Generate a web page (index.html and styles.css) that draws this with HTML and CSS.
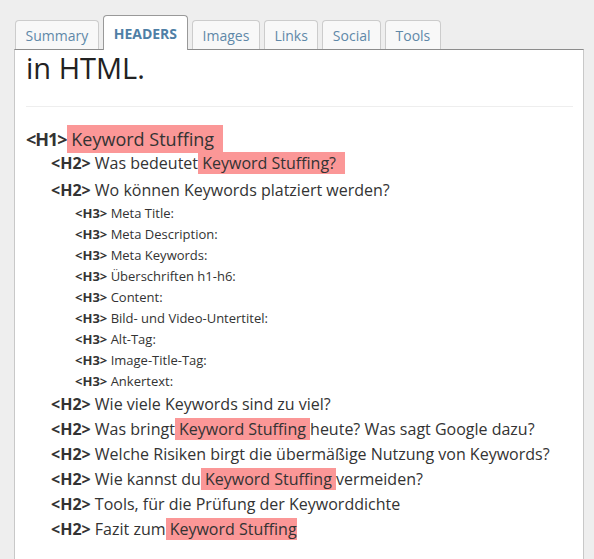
FILE: index.html
```html
<!DOCTYPE html>
<html>
  <head>
    <title>Headers</title>
    <link rel="stylesheet" href="styles.css">
  </head>
  <body>
    <div class="tabs">
      <div class="tab">Summary</div>
      <div class="tab active">HEADERS</div>
      <div class="tab">Images</div>
      <div class="tab">Links</div>
      <div class="tab">Social</div>
      <div class="tab">Tools</div>
    </div>
    <div class="panel">
      <div class="title">in HTML.</div>
      <div class="divider"></div>
      <ul class="outline">
        <li class="h1"><b>&lt;H1&gt;</b><span class="hl end"> Keyword Stuffing</span></li>
        <li class="h2"><b>&lt;H2&gt;</b> Was bedeutet<span class="hl end"> Keyword Stuffing?</span></li>
        <li class="h2 next"><b>&lt;H2&gt;</b> Wo können Keywords platziert werden?</li>
        <li class="h3"><b>&lt;H3&gt;</b> Meta Title:</li>
        <li class="h3"><b>&lt;H3&gt;</b> Meta Description:</li>
        <li class="h3"><b>&lt;H3&gt;</b> Meta Keywords:</li>
        <li class="h3"><b>&lt;H3&gt;</b> Überschriften h1-h6:</li>
        <li class="h3"><b>&lt;H3&gt;</b> Content:</li>
        <li class="h3"><b>&lt;H3&gt;</b> Bild- und Video-Untertitel:</li>
        <li class="h3"><b>&lt;H3&gt;</b> Alt-Tag:</li>
        <li class="h3"><b>&lt;H3&gt;</b> Image-Title-Tag:</li>
        <li class="h3"><b>&lt;H3&gt;</b> Ankertext:</li>
        <li class="h2"><b>&lt;H2&gt;</b> Wie viele Keywords sind zu viel?</li>
        <li class="h2"><b>&lt;H2&gt;</b> Was bringt<span class="hl"> Keyword Stuffing </span>heute? Was sagt Google dazu?</li>
        <li class="h2"><b>&lt;H2&gt;</b> Welche Risiken birgt die übermäßige Nutzung von Keywords?</li>
        <li class="h2"><b>&lt;H2&gt;</b> Wie kannst du<span class="hl"> Keyword Stuffing </span>vermeiden?</li>
        <li class="h2"><b>&lt;H2&gt;</b> Tools, für die Prüfung der Keyworddichte</li>
        <li class="h2"><b>&lt;H2&gt;</b> Fazit zum<span class="hl"> Keyword Stuffing</span></li>
      </ul>
    </div>
  </body>
</html>
```

FILE: styles.css
```css
body {
  margin: 0;
  background: #eeeeee;
  font-family: "Open Sans", "DejaVu Sans", sans-serif;
  color: #333333;
}
.tabs {
  display: flex;
  align-items: flex-end;
  gap: 4px;
  padding: 15px 0 0 15px;
}
.tab {
  height: 29px;
  line-height: 29px;
  padding: 0 9.5px;
  box-sizing: border-box;
  border: 1px solid #cccccc;
  border-bottom: none;
  border-radius: 4px 4px 0 0;
  background: #f8f8f8;
  color: #5f88a8;
  font-size: 14px;
}
.tab.active {
  height: 35px;
  line-height: 36px;
  padding: 0 10px;
  margin-bottom: -1px;
  border-color: #999999;
  background: #ffffff;
  color: #4f7fa6;
  font-weight: bold;
}
.panel {
  width: 570px;
  height: 520px;
  margin-left: 14px;
  box-sizing: border-box;
  background: #ffffff;
  border: 1px solid #c8c8c8;
  border-top-color: #8c8c8c;
  padding: 0 11px;
  overflow: hidden;
}
.title {
  font-size: 29px;
  line-height: 30px;
  margin-top: 3px;
  color: #222222;
}
.divider {
  height: 1px;
  background: #eeeeee;
  margin: 23px 0 0 0;
  width: 547px;
}
.outline {
  list-style: none;
  margin: 0;
  padding: 0;
}
.outline b {
  font-weight: bold;
}
.outline .h1 {
  font-size: 18px;
  line-height: 24px;
  margin-top: 20px;
}
.outline .h1 b {
  letter-spacing: -1px;
}
.outline .h2 {
  font-size: 16px;
  line-height: 25px;
  padding-left: 25px;
}
.outline .h2.next {
  margin-top: 2px;
}
.outline .h3 {
  font-size: 13px;
  line-height: 21px;
  padding-left: 49px;
}
.hl {
  background: #fb9797;
}
.h1 .hl {
  padding: 2px 0;
}
.hl.end {
  padding-right: 9px;
}
```
